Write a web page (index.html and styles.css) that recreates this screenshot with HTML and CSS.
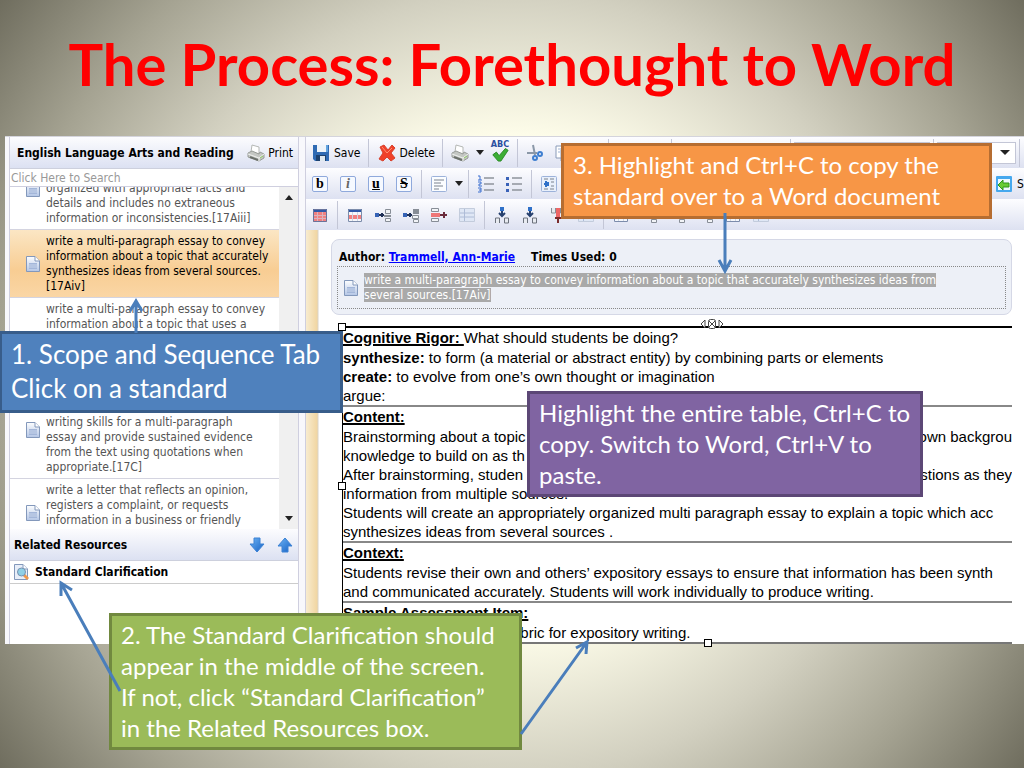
FILE: index.html
```html
<!DOCTYPE html>
<html lang="en">
<head>
  <meta charset="UTF-8" />
  <title>The Process: Forethought to Word</title>
  <link rel="stylesheet" href="styles.css">
</head>
<body>

  <!-- Icon set -->
  <svg class="sprite" aria-hidden="true">
    <defs>
      <linearGradient id="sheet" x1="0" y1="0" x2="0" y2="1">
        <stop offset="0" stop-color="#fdfeff" /><stop offset="1" stop-color="#b4c6e6" />
      </linearGradient>
      <linearGradient id="blueArrow" x1="0" y1="0" x2="1" y2="1">
        <stop offset="0" stop-color="#6db4f5" /><stop offset="1" stop-color="#1560c4" />
      </linearGradient>
    </defs>
    <symbol id="doc" viewBox="0 0 16 18">
      <path d="M1.500 1.500h8.500l4.500 4.500v10.500h-13z" fill="url(#sheet)" stroke="#8398bb" />
      <path d="M10 1.500v4.500h4.500" fill="#fff" stroke="#8398bb" />
      <path d="M4 8h8v6h-8z" fill="#a3b6d9" /><path d="M4 10h8M4 12h8" stroke="#c9d6ec" />
    </symbol>
    <symbol id="docSearch" viewBox="0 0 16 18">
      <path d="M1.500 1.500h8.500l4.500 4.500v10.500h-13z" fill="#e8eef8" stroke="#8398bb" />
      <path d="M10 1.500v4.500h4.500" fill="#fff" stroke="#8398bb" />
      <path d="M11 12l4 4" stroke="#f0984a" stroke-width="3" />
      <circle cx="8.500" cy="9" r="4" fill="#8fd0e6" stroke="#7690b0" />
    </symbol>
    <symbol id="printer" viewBox="0 0 18 18">
      <path d="M4 8l1-7 7 2v7z" fill="#fff" stroke="#b5b8b5" />
      <path d="M1 9l4-2 7 3 1-2 4 2v4l-5 3L1 13z" fill="#c4c7c3" stroke="#989c98" />
      <path d="M1 10l11 4 5-4M12 14v3" fill="none" stroke="#eef0ee" />
      <path d="M3 13l8 3" stroke="#6b706b" stroke-width="2" /><path d="M13 14l3-2" stroke="#8ecb62" />
    </symbol>
    <symbol id="save" viewBox="0 0 18 18">
      <path d="M1 1h16v16H3l-2-2z" fill="#2f6ab3" />
      <path d="M5 1h9v7H5z" fill="#eef4fa" /><path d="M4 11h10v6H4z" fill="#1d416e" />
      <path d="M8 12h5v5H8z" fill="#dfe8ef" /><path d="M14 1h2v7h-2z" fill="#62a4df" />
    </symbol>
    <symbol id="delete" viewBox="0 0 18 18">
      <path d="M2 3l4-2 4 5 4-5 3 3-4 5 4 5-4 3-4-4-4 4-4-2 4-6z" fill="#f0412a" stroke="#d8432e" />
      <path d="M4 3l5 6 5-5" fill="none" stroke="#ff9072" />
    </symbol>
    <symbol id="check" viewBox="0 0 20 20">
      <path d="M2 12l4-3 3 4 7-8 3 2-8 12H8z" fill="#3cae35" stroke="#24861f" />
    </symbol>
    <symbol id="cut" viewBox="0 0 18 18">
      <path d="M7 1l2 10M1 9h10" stroke="#8b98a8" stroke-width="2" />
      <circle cx="9" cy="14" r="2" fill="none" stroke="#3f7fd0" stroke-width="2" />
      <circle cx="14" cy="10" r="2" fill="none" stroke="#3f7fd0" stroke-width="2" />
    </symbol>
    <symbol id="copy" viewBox="0 0 18 18">
      <path d="M2 2h9v12H2z" fill="#fff" stroke="#8a9bb8" /><path d="M7 6h9v11H7z" fill="#eef3fa" stroke="#8a9bb8" />
      <path d="M4 5h4M4 8h2M9 9h5M9 12h5" stroke="#9eb2d2" />
    </symbol>
    <symbol id="align" viewBox="0 0 18 18">
      <rect x="1.500" y="1.500" width="15" height="15" rx="1" fill="#fbfdff" stroke="#9cb2da" />
      <path d="M4 5h10M4 8h7M4 11h9M4 14h5" stroke="#7b828e" />
    </symbol>
    <symbol id="indent" viewBox="0 0 18 18">
      <rect x="1.500" y="1.500" width="15" height="15" rx="1" fill="#e9f0fb" stroke="#9cb2da" />
      <path d="M4 4h4M10 4h4M4 14h4M10 14h4M11 7h3M11 11h3" stroke="#7b828e" />
      <path d="M4 9h5M6 6v6M8 7v4" stroke="#2f70c8" stroke-width="2" />
    </symbol>
    <symbol id="ol" viewBox="0 0 18 18">
      <path d="M7 3h10M7 9h10M7 15h10" stroke="#8e949c" stroke-width="1.500" />
      <path d="M1 1h2v4M1 5h4M1 7h3v2H2v2h3M1 13h3v2H2M4 15v2H1" fill="none" stroke="#3a6fd0" />
    </symbol>
    <symbol id="ul" viewBox="0 0 18 18">
      <path d="M7 3h10M7 9h10M7 15h10" stroke="#8e949c" stroke-width="1.500" />
      <path d="M1 2h3v3H1zM1 8h3v3H1zM1 14h3v3H1z" fill="#3a62b8" />
    </symbol>
    <symbol id="table" viewBox="0 0 18 18">
      <path d="M2 3h14v13H2z" fill="#f08080" /><path d="M2 3h14v3H2z" fill="#2f58a8" />
      <path d="M2 9.500h14M2 12.500h14M6.500 6v10M11.500 6v10" stroke="#dcb3bd" /><path d="M2.500 3.500h13v12h-13z" fill="none" stroke="#69749c" />
    </symbol>
    <symbol id="tableRow" viewBox="0 0 18 18">
      <path d="M2 3h14v13H2z" fill="#f5f7fb" /><path d="M2 3h14v3H2z" fill="#2f58a8" /><path d="M3 9h12v4H3z" fill="#f08080" />
      <path d="M6.500 6v10M11.500 6v10" stroke="#cfd6e2" /><path d="M2.500 3.500h13v12h-13z" fill="none" stroke="#7c8cab" />
    </symbol>
    <symbol id="rowAbove" viewBox="0 0 18 18">
      <path d="M1 7h4v4H1z" fill="#3562b5" /><path d="M5 9h5M8 7v4" stroke="#1f3056" stroke-width="2" />
      <path d="M11.500 3.500h5v4h-5zM11.500 12.500h5v3h-5z" fill="#f2f4f7" stroke="#878d96" /><path d="M10 9h7v2h-7z" fill="#878d96" />
    </symbol>
    <symbol id="rowBelow" viewBox="0 0 18 18">
      <path d="M1 7h4v4H1z" fill="#3562b5" /><path d="M5 9h5M8 7v4" stroke="#1f3056" stroke-width="2" />
      <path d="M11 3h6v5h-6z" fill="#878d96" /><path d="M10.500 9.500h6v3h-6zM11.500 13.500h5v3h-5z" fill="#f2f4f7" stroke="#878d96" />
    </symbol>
    <symbol id="rowDelete" viewBox="0 0 18 18">
      <path d="M1.500 2.500h7v3h-7zM1.500 12.500h7v3h-7z" fill="#f2f4f7" stroke="#878d96" />
      <path d="M1 7h9v4H1z" fill="#ee7777" /><path d="M10 9h7M14 6v6" stroke="#6a2b3b" stroke-width="2" />
    </symbol>
    <symbol id="tableGray" viewBox="0 0 18 18">
      <path d="M1.500 2.500h15v13h-15z" fill="#dfe7f5" stroke="#c3ccdc" /><path d="M2 7h14M2 11h14M6.500 3v12" stroke="#aebcd7" />
    </symbol>
    <symbol id="colLeft" viewBox="0 0 18 18">
      <path d="M7 1h4v4H7z" fill="#2f70c8" /><path d="M9 5v5M6 7l3 3 3-3" fill="none" stroke="#26406e" stroke-width="2" />
      <path d="M2.500 17v-5h4v5M11.500 17v-5h4v5z" fill="#e8ebf0" stroke="#6c727c" />
    </symbol>
    <symbol id="colDelete" viewBox="0 0 18 18">
      <path d="M2.500 2v5h4V2M11.500 2v5h4V2" fill="#e8ebf0" stroke="#878d96" />
      <path d="M7 2h4v9H7z" fill="#ee6666" /><path d="M9 11v6M6 12h6" stroke="#7a2b2b" stroke-width="2" />
    </symbol>
    <symbol id="send" viewBox="0 0 18 18">
      <rect x="1" y="1" width="16" height="16" rx="1" fill="#46a8ee" /><path d="M3 4h12v11H3z" fill="#eef9ff" />
      <path d="M3 10l5-5v3h6v4H8v3z" fill="#67cc35" stroke="#2e951e" />
    </symbol>
    <symbol id="arrowDown" viewBox="0 0 16 16">
      <path d="M5 1h6v6h4l-7 8-7-8h4z" fill="url(#blueArrow)" stroke="#3c82d4" />
    </symbol>
    <symbol id="arrowUp" viewBox="0 0 16 16">
      <path d="M5 15h6V9h4L8 1 1 9h4z" fill="url(#blueArrow)" stroke="#3c82d4" />
    </symbol>
  </svg>

  <main class="slide">
    <h1>The Process: Forethought to Word</h1>

    <div class="app">
      <!-- Standards list -->
      <aside class="sidebar">
        <div class="panel-head">
          <h2 class="subject">English Language Arts and Reading</h2>
          <button class="print"><svg class="icon"><use href="#printer" /></svg>Print</button>
        </div>
        <input class="search" type="text" placeholder="Click Here to Search" aria-label="Search standards" />
        <div class="scroller">
          <ul class="standards">
            <li class="scrolled five"><svg class="doc"><use href="#doc" /></svg><p>organized with appropriate facts and<br>details and includes no extraneous<br>information or inconsistencies.[17Aiii]</p></li>
            <li class="selected"><svg class="doc"><use href="#doc" /></svg><p>write a multi-paragraph essay to convey<br>information about a topic that accurately<br>synthesizes ideas from several sources.<br>[17Aiv]</p></li>
            <li class="five top"><svg class="doc"><use href="#doc" /></svg><p>write a multi-paragraph essay to convey<br>information about a topic that uses a</p></li>
            <li class="six"><svg class="doc"><use href="#doc" /></svg><p>writing skills for a multi-paragraph<br>essay and provide sustained evidence<br>from the text using quotations when<br>appropriate.[17C]</p></li>
            <li class="top"><svg class="doc"><use href="#doc" /></svg><p>write a letter that reflects an opinion,<br>registers a complaint, or requests<br>information in a business or friendly</p></li>
          </ul>
          <div class="track"><span class="tri up"></span><span class="tri"></span></div>
        </div>
        <div class="panel-head related">
          <h2>Related Resources</h2>
          <button class="move" aria-label="Move down"><svg><use href="#arrowDown" /></svg></button>
          <button class="move" aria-label="Move up"><svg><use href="#arrowUp" /></svg></button>
        </div>
        <a class="resource" href="#"><svg class="doc"><use href="#docSearch" /></svg>Standard Clarification</a>
      </aside>

      <!-- Editor -->
      <section class="editor">
        <div class="toolbar">
          <button class="labelled"><svg class="icon"><use href="#save" /></svg>Save</button>
          <i class="sep"></i>
          <button class="labelled"><svg class="icon"><use href="#delete" /></svg>Delete</button>
          <i class="sep"></i>
          <button class="tool" aria-label="Print"><svg class="icon"><use href="#printer" /></svg></button>
          <button class="caret" aria-label="Print options"><span class="tri"></span></button>
          <button class="tool spell" aria-label="Spelling"><span>ABC</span><svg class="icon"><use href="#check" /></svg></button>
          <i class="sep"></i>
          <button class="tool" aria-label="Cut"><svg class="icon"><use href="#cut" /></svg></button>
          <button class="tool" aria-label="Copy"><svg class="icon"><use href="#copy" /></svg></button>
          <button class="tool" aria-label="Paste"><svg class="icon"><use href="#copy" /></svg></button>
          <i class="sep"></i>
          <button class="tool" aria-label="Align left"><svg class="icon"><use href="#align" /></svg></button>
          <button class="tool" aria-label="Align right"><svg class="icon"><use href="#align" /></svg></button>
          <i class="sep"></i>
          <button class="tool" aria-label="Numbering"><svg class="icon"><use href="#ol" /></svg></button>
          <button class="tool" aria-label="Bullets"><svg class="icon"><use href="#ul" /></svg></button>
          <button class="tool" aria-label="Indent"><svg class="icon"><use href="#indent" /></svg></button>
          <button class="tool" aria-label="Outdent"><svg class="icon"><use href="#indent" /></svg></button>
          <i class="sep"></i>
          <select class="font" aria-label="Font"></select>
          <i class="sep"></i>
          <div class="size-box"><select class="size" aria-label="Size"></select><span class="tri"></span></div>
          <i class="sep"></i>
        </div>
        <div class="toolbar">
          <button class="tool" aria-label="Bold"><span class="letter">b</span></button>
          <button class="tool" aria-label="Italic"><span class="letter italic">i</span></button>
          <button class="tool" aria-label="Underline"><span class="letter underline">u</span></button>
          <button class="tool" aria-label="Strikethrough"><span class="letter strike">S</span></button>
          <i class="sep"></i>
          <button class="tool" aria-label="Alignment"><svg class="icon"><use href="#align" /></svg></button>
          <button class="caret" aria-label="Alignment options"><span class="tri"></span></button>
          <i class="sep"></i>
          <button class="tool" aria-label="Numbered list"><svg class="icon"><use href="#ol" /></svg></button>
          <button class="tool" aria-label="Bulleted list"><svg class="icon"><use href="#ul" /></svg></button>
          <i class="sep"></i>
          <button class="tool" aria-label="Increase indent"><svg class="icon"><use href="#indent" /></svg></button>
          <button class="send"><svg class="icon"><use href="#send" /></svg>S</button>
        </div>
        <div class="toolbar">
          <button class="tool" aria-label="Table"><svg class="icon"><use href="#table" /></svg></button>
          <i class="sep"></i>
          <button class="tool" aria-label="Row properties"><svg class="icon"><use href="#tableRow" /></svg></button>
          <button class="tool" aria-label="Row above"><svg class="icon"><use href="#rowAbove" /></svg></button>
          <button class="tool" aria-label="Row below"><svg class="icon"><use href="#rowBelow" /></svg></button>
          <button class="tool" aria-label="Delete row"><svg class="icon"><use href="#rowDelete" /></svg></button>
          <button class="tool" aria-label="Table grid"><svg class="icon"><use href="#tableGray" /></svg></button>
          <i class="sep"></i>
          <button class="tool" aria-label="Column left"><svg class="icon"><use href="#colLeft" /></svg></button>
          <button class="tool" aria-label="Column right"><svg class="icon"><use href="#colLeft" /></svg></button>
          <button class="tool" aria-label="Delete column"><svg class="icon"><use href="#colDelete" /></svg></button>
          <button class="tool" aria-label="Cell grid"><svg class="icon"><use href="#tableGray" /></svg></button>
          <i class="sep"></i>
          <button class="tool" aria-label="Cell"><svg class="icon"><use href="#tableRow" /></svg></button>
          <button class="tool" aria-label="Cell left"><svg class="icon"><use href="#rowBelow" /></svg></button>
          <button class="tool" aria-label="Cell right"><svg class="icon"><use href="#rowBelow" /></svg></button>
          <button class="tool" aria-label="Split cell"><svg class="icon"><use href="#rowBelow" /></svg></button>
          <button class="tool" aria-label="Merge cells"><svg class="icon"><use href="#tableRow" /></svg></button>
          <button class="tool" aria-label="Cell borders"><svg class="icon"><use href="#tableGray" /></svg></button>
        </div>

        <div class="page">
          <div class="card">
            <p class="meta">Author: <a href="#">Trammell, Ann-Marie</a><span class="used">Times Used: 0</span></p>
            <div class="standard">
              <svg class="doc"><use href="#doc" /></svg>
              <p><mark>write a multi-paragraph essay to convey information about a topic that accurately synthesizes ideas from<br>several sources.[17Aiv]</mark></p>
            </div>
          </div>

          <div class="table-box">
            <table>
              <tr><td>
                <p class="first"><strong class="label">Cognitive Rigor: </strong>What should students be doing?</p>
                <p><strong>synthesize:</strong> to form (a material or abstract entity) by combining parts or elements</p>
                <p><strong>create:</strong> to evolve from one’s own thought or imagination</p>
                <p>argue:</p>
              </td></tr>
              <tr><td>
                <p class="first"><strong class="label">Content:</strong></p>
                <p class="split"><span>Brainstorming about a topic</span><span>own backgrou</span></p>
                <p>knowledge to build on as th</p>
                <p class="split"><span>After brainstorming, studen</span><span>stions as they</span></p>
                <p>information from multiple sources.</p>
                <p>Students will create an appropriately organized multi paragraph essay to explain a topic which acc</p>
                <p>synthesizes ideas from several sources .</p>
              </td></tr>
              <tr><td>
                <p class="first"><strong class="label">Context:</strong></p>
                <p>Students revise their own and others’ expository essays to ensure that information has been synth</p>
                <p>and communicated accurately. Students will work individually to produce writing.</p>
              </td></tr>
              <tr><td>
                <p class="first"><strong class="label">Sample Assessment Item:</strong></p>
                <p class="rubric">rubric for expository writing.</p>
              </td></tr>
            </table>
            <span class="handle corner"></span>
            <span class="handle left"></span>
            <span class="handle bottom"></span>
            <svg class="move-mark" viewBox="0 0 24 12">
              <path d="M5 2L1 6l4 4zM19 2l4 4-4 4z" fill="#fff" stroke="#444" />
              <rect x="8.500" y="1.500" width="7" height="9" rx="2" fill="#fff" stroke="#444" /><path d="M9 3l6 6M15 3L9 9" stroke="#444" />
            </svg>
          </div>
        </div>
      </section>
    </div>

    <!-- Callouts -->
    <p class="callout step-one">1. Scope and Sequence Tab<br>Click on a standard</p>
    <p class="callout step-two">2. The Standard Clarification should<br>appear in the middle of the screen.<br>If not, click “Standard Clarification”<br>in the Related Resources box.</p>
    <p class="callout step-three">3. Highlight and Ctrl+C to copy the<br>standard over to a Word document</p>
    <p class="callout step-four">Highlight the entire table, Ctrl+C to<br>copy. Switch to Word, Ctrl+V to<br>paste.</p>

    <svg class="arrows" viewBox="0 0 1024 768">
      <path d="M136 333V301M130 311l6-10 6 10" />
      <path d="M725 213V271M719 260l6 11 6-11" />
      <path d="M120 691L61 583M61 596v-13l11 7" />
      <path d="M521 734L587 642M576 648l11-6-1 12" />
    </svg>
  </main>

</body>
</html>
```
FILE: styles.css
```css
* {
  box-sizing: border-box;
}

body {
  margin: 0;
  font-family: "DejaVu Sans Condensed", "DejaVu Sans", sans-serif;
  font-size: 12px;
  color: #000;
}

h1, h2, p, ul {
  margin: 0;
  padding: 0;
}

button {
  border: none;
  background: none;
  padding: 0;
  font: inherit;
  color: inherit;
}

.sprite {
  position: absolute;
  width: 0;
  height: 0;
}

.slide {
  position: relative;
  min-height: 100vh;
  overflow: hidden;
  background: radial-gradient(circle farthest-corner at 50% 50%, #fffff2 0%, #fdfce9 39%, #d2d0c0 61%, #a5a392 80%, #6f6d5e 100%);
}

h1 {
  padding: 28px 0 36px;
  line-height: 72px;
  font-family: Lato, sans-serif;
  font-size: 58px;
  font-weight: bold;
  text-align: center;
  color: #f00;
}

/* Application window */
.app {
  display: flex;
  margin-left: 5px;
  border-top: 1px solid #d4d4dc;
  background: #f8f8fc;
}

.sidebar {
  width: 290px;
  margin: 0 6px 0 4px;
  border: 1px solid #cfcfdf;
  border-width: 0 1px;
  background: #fff;
}

.panel-head {
  display: flex;
  align-items: center;
  height: 32px;
  padding: 0 5px 0 7px;
  background: linear-gradient(#fcfcfe, #dce1f2);
  border-bottom: 1px solid #cdd0dd;
}

.panel-head h2 {
  flex: 1;
  font-size: 12px;
  white-space: nowrap;
}

.print {
  display: flex;
  align-items: center;
  gap: 3px;
}

.icon {
  width: 18px;
  height: 18px;
  flex: none;
}

.search {
  display: block;
  width: 100%;
  height: 18px;
  padding: 0 1px;
  border: none;
  border-bottom: 1px solid #cfcfdf;
  font: inherit;
}

.search::placeholder {
  color: #999;
  opacity: 1;
}

.scroller {
  display: flex;
  height: 342px;
  overflow: hidden;
}

.standards {
  flex: 1;
  list-style: none;
}

.standards li {
  display: flex;
  align-items: center;
  gap: 5px;
  min-height: 68px;
  padding: 4px 0 3px 15px;
  border-bottom: 1px solid #d4d4e0;
  line-height: 15px;
  white-space: nowrap;
  color: #555;
}

.standards li p {
  align-self: flex-end;
}

.standards li.top p {
  align-self: flex-start;
}

.standards li.five {
  min-height: 83px;
}

.standards li.six {
  min-height: 98px;
}

/* list is scrolled down by half an entry */
.standards li.scrolled {
  margin-top: -40px;
}

.standards li.selected {
  color: #000;
  background: linear-gradient(#fbe6c4, #f8cd93 60%, #fad6a5);
}

.doc {
  width: 16px;
  height: 18px;
  flex: none;
}

.track {
  display: flex;
  flex-direction: column;
  justify-content: space-between;
  align-items: center;
  width: 19px;
  padding: 8px 0;
  background: #f0f0f0;
}

.tri {
  border: 4px solid transparent;
  border-top: 5px solid #222;
  border-bottom: none;
}

.tri.up {
  border-top: none;
  border-bottom: 5px solid #222;
}

.related {
  padding-left: 4px;
}

.move {
  width: 16px;
  height: 16px;
  margin-left: 12px;
}

.move svg {
  display: block;
  width: 16px;
  height: 16px;
}

.resource {
  display: flex;
  align-items: center;
  gap: 6px;
  height: 23px;
  padding-left: 3px;
  border-bottom: 1px solid #ccc;
  font-weight: bold;
  color: #000;
  text-decoration: none;
}

/* Editor */
.editor {
  flex: 1;
  min-width: 0;
  border-left: 1px solid #cfcfdf;
}

.toolbar {
  display: flex;
  align-items: center;
  height: 31px;
  overflow: hidden;
  background: linear-gradient(#fdfdff, #dde1f1);
}

.tool,
.labelled,
.caret,
.send {
  display: flex;
  align-items: center;
  justify-content: center;
  flex: none;
}

.tool {
  width: 28px;
  height: 28px;
}

.labelled {
  gap: 4px;
  padding: 0 4px 0 6px;
}

.caret {
  width: 12px;
  height: 28px;
}

.sep {
  flex: none;
  width: 1px;
  height: 28px;
  margin: 0 3px;
  background: #c3c6d6;
}

.spell {
  position: relative;
}

.spell span {
  position: absolute;
  top: 0;
  font-size: 9px;
  font-weight: bold;
  color: #2c50a0;
}

.letter {
  width: 16px;
  height: 16px;
  border: 1px solid #8fa9dc;
  border-radius: 2px;
  background: #f6f9ff;
  font: bold 14px/13px "Liberation Serif", serif;
  text-align: center;
}

.italic {
  font-style: italic;
  color: #666;
}

.underline {
  text-decoration: underline;
}

.strike {
  text-decoration: line-through;
}

.font,
.size {
  appearance: none;
  height: 22px;
  border: 1px solid #c3c6d6;
  border-radius: 0;
  background: #fff;
}

.font {
  width: 136px;
  flex: none;
}

.size-box {
  position: relative;
  flex: none;
}

.size {
  display: block;
  width: 79px;
}

.size-box .tri {
  position: absolute;
  top: 8px;
  right: 6px;
  border-width: 5px 5px 0;
}

.send {
  gap: 4px;
  width: 29px;
  margin-left: auto;
}

.page {
  padding: 9px 12px 0 25px;
  background: linear-gradient(to right, #f8ecd0, #f1d6a2 11px, #d9d3c8 12px, #fff 13px);
}

.card {
  height: 76px;
  padding: 8px 5px 0;
  border: 1px solid #d5d8e6;
  border-radius: 8px;
  background: #edf0f7;
}

.meta {
  padding-left: 2px;
  line-height: 18px;
  font-weight: bold;
}

.meta a {
  color: #00f;
}

.used {
  margin-left: 16px;
}

.standard {
  display: flex;
  align-items: center;
  gap: 5px;
  height: 43px;
  padding-left: 5px;
  border: 1px dotted #888;
  line-height: 15px;
  white-space: nowrap;
}

mark {
  background: #a9a9a9;
  color: #fff;
}

.table-box {
  position: relative;
  margin: 11px 0 0 11px;
  font-family: "Liberation Sans", sans-serif;
  font-size: 15px;
  line-height: 19px;
  white-space: nowrap;
}

table {
  width: 100%;
  table-layout: fixed;
  border-spacing: 0;
  border-left: 1px solid #000;
  border-bottom: 2px solid #777;
}

td {
  padding: 0;
  border-top: 2px solid #888;
  overflow: hidden;
}

tr:first-child td {
  border-color: #000;
}

.first {
  line-height: 20px;
}

.label {
  text-decoration: underline;
  text-decoration-thickness: 2px;
  white-space: pre;
}

.split {
  display: flex;
  justify-content: space-between;
}

.rubric {
  padding-left: 164px;
}

.handle {
  position: absolute;
  width: 8px;
  height: 8px;
  border: 1px solid #000;
  background: #fff;
}

.corner {
  top: -3px;
  left: -4px;
}

.left {
  top: 49%;
  left: -4px;
}

.bottom {
  bottom: -3px;
  left: 54%;
}

.move-mark {
  position: absolute;
  top: -8px;
  left: 358px;
  width: 24px;
  height: 12px;
}

/* Callouts over the screenshot */
.callout {
  position: absolute;
  border: 3px solid;
  padding: 3px 9px;
  font-family: Lato, sans-serif;
  font-size: 24px;
  line-height: 31px;
  white-space: nowrap;
  color: #fff;
}

.step-one {
  left: -1px;
  top: 331px;
  width: 344px;
  height: 82px;
  border-color: #385d8a;
  background: #4f81bd;
  font-size: 26px;
  line-height: 34px;
}

.step-two {
  left: 109px;
  top: 613px;
  width: 413px;
  height: 137px;
  border-color: #71893f;
  background: #9bbb59;
}

.step-three {
  left: 561px;
  top: 143px;
  width: 431px;
  height: 76px;
  border-color: #b66d31;
  background: #f79646;
}

.step-four {
  left: 527px;
  top: 391px;
  width: 396px;
  height: 106px;
  border-color: #5c4776;
  background: #8064a2;
}

.arrows {
  position: absolute;
  top: 0;
  left: 0;
  width: 1024px;
  height: 768px;
  fill: none;
  stroke: #4a7ebb;
  stroke-width: 3;
  pointer-events: none;
}
```
